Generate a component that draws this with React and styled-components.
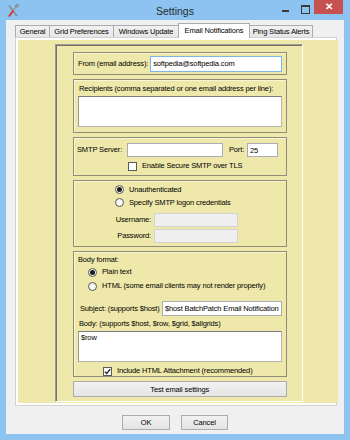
import React from "react";
import styled, { createGlobalStyle } from "styled-components";

const Global = createGlobalStyle`
  html, body { margin: 0; padding: 0; background: #8cc3f1; }
  body { width: 350px; height: 440px; overflow: hidden; font-family: "Liberation Sans", Arial, sans-serif; }
  * { box-sizing: border-box; }
`;

const Win = styled.div`
  width: 350px;
  height: 440px;
  background: #8cc3f1;
  display: flex;
  flex-direction: column;
`;

const TitleBar = styled.div`
  height: 20px;
  flex: none;
  display: grid;
  grid-template-columns: 1fr auto 1fr;
  align-items: start;
`;

const TitleLeft = styled.div`
  display: flex;
  padding: 4px 0 0 7px;
`;

const TitleText = styled.div`
  font-size: 10.5px;
  line-height: 12px;
  padding-top: 5px;
  color: #2a2a2a;
`;

const Controls = styled.div`
  display: flex;
  justify-content: flex-end;
  align-items: flex-start;
  padding-right: 7px;
`;

const MinBtn = styled.div`
  width: 24px;
  height: 14px;
  display: flex;
  justify-content: center;
  &::before {
    content: "";
    width: 7px;
    height: 2px;
    margin-top: 10px;
    background: #3a3a3a;
  }
`;

const MaxBtn = styled.div`
  width: 17px;
  height: 14px;
  display: flex;
  justify-content: center;
  padding-top: 5px;
  &::before {
    content: "";
    width: 7px;
    height: 6px;
    border: 1px solid #3a3a3a;
    border-top-width: 2px;
  }
`;

const CloseBtn = styled.div`
  width: 29px;
  height: 14px;
  background: #c75050;
  color: #fff;
  font-size: 10px;
  line-height: 14px;
  text-align: center;
  font-weight: bold;
`;

const Client = styled.div`
  flex: 1;
  margin: 0 6px 6px 6px;
  background: #f0f0f0;
  display: flex;
  flex-direction: column;
  padding: 3px 7px 0 9px;
`;

const TabStrip = styled.div`
  height: 14px;
  flex: none;
  display: flex;
  align-items: flex-end;
`;

const Tab = styled.div`
  position: relative;
  z-index: ${p => (p.$active ? 2 : 1)};
  width: ${p => p.$w}px;
  height: ${p => (p.$active ? 15 : 12)}px;
  margin-bottom: ${p => (p.$active ? -1 : 0)}px;
  margin-left: -1px;
  &:first-child { margin-left: 0; }
  border: 1px solid #acacac;
  border-bottom: none;
  background: ${p => (p.$active ? "#ffffff" : "linear-gradient(#f2f2f2, #e6e6e6)")};
  display: flex;
  align-items: center;
  justify-content: center;
  font-size: 7.5px;
  letter-spacing: -0.15px;
  color: #000;
  white-space: nowrap;
  padding-bottom: ${p => (p.$active ? 2 : 0)}px;
`;

const Panel = styled.div`
  height: 369px;
  flex: none;
  border: 1px solid #d2d2d2;
  background: #fff;
  padding: 2px;
  display: flex;
`;

const Page = styled.div`
  flex: 1;
  background: #eee8aa;
  padding: 4px 35px 1px 37px;
  display: flex;
`;

const Sunken = styled.div`
  flex: 1;
  border: 1px solid;
  border-color: #9a9a9a #ffffff #ffffff #9a9a9a;
  box-shadow: inset 1px 1px 0 #77745f;
  padding: 7px 15px 0 17px;
  display: flex;
  flex-direction: column;
  gap: 4px;
`;

const Group = styled.div`
  height: ${p => p.$h}px;
  flex: none;
  border: 1px solid #8f8c79;
  box-shadow: inset 1px 1px 0 #faf6d2;
  display: flex;
  flex-direction: ${p => (p.$row ? "row" : "column")};
  align-items: ${p => (p.$row ? "center" : "stretch")};
  padding: ${p => p.$pad || "0"};
`;

const Label = styled.span`
  font-size: 7.5px;
  letter-spacing: -0.15px;
  line-height: 10px;
  color: #000;
  white-space: nowrap;
  flex: none;
  width: ${p => (p.$w ? `${p.$w}px` : "auto")};
  text-align: ${p => p.$align || "left"};
  padding-left: ${p => p.$indent || 0}px;
`;

const Field = styled.div`
  height: ${p => p.$h || 15}px;
  width: ${p => (p.$w ? `${p.$w}px` : "auto")};
  flex: ${p => (p.$w ? "none" : "1")};
  min-width: 0;
  margin-left: ${p => p.$ml || 0}px;
  background: ${p => (p.$disabled ? "#efefef" : "#ffffff")};
  border: 1px solid ${p => (p.$focus ? "#7eb4ea" : p.$disabled ? "#d3d3d3" : "#abadb3")};
  font-size: 7.5px;
  letter-spacing: -0.15px;
  line-height: 10px;
  color: #000;
  padding: 1px 2px 0 2px;
  white-space: nowrap;
  overflow: hidden;
  display: flex;
  align-items: center;
`;

const TextArea = styled.div`
  height: 31px;
  flex: none;
  margin: ${p => p.$m || "0"};
  background: #fff;
  border: 1px solid #b4b4b4;
  border-top-color: #7a7a7a;
  border-left-color: #9a9a9a;
  font-size: 7.5px;
  letter-spacing: -0.15px;
  line-height: 10px;
  color: #000;
  padding: 1px 2px;
`;

const Row = styled.div`
  display: flex;
  align-items: center;
  height: ${p => p.$h}px;
  flex: none;
  margin-top: ${p => p.$mt || 0}px;
  padding-left: ${p => p.$pl || 0}px;
  padding-right: ${p => p.$pr || 0}px;
`;

const RadioDot = styled.span`
  width: 9px;
  height: 9px;
  flex: none;
  border-radius: 50%;
  border: 1px solid #5a5a5a;
  background: radial-gradient(#ffffff, #ececec);
  display: flex;
  align-items: center;
  justify-content: center;
  margin-right: 5px;
  &::after {
    content: "";
    width: 5px;
    height: 5px;
    border-radius: 50%;
    background: ${p => (p.$on ? "#1b1b1b" : "transparent")};
  }
`;

const CheckBox = styled.span`
  width: 9px;
  height: 9px;
  flex: none;
  border: 1px solid #5a5a5a;
  background: #fff;
  margin-right: 5px;
  display: flex;
  align-items: center;
  justify-content: center;
`;

const WideButton = styled.div`
  height: 16px;
  flex: none;
  border: 1px solid #acacac;
  background: linear-gradient(#f1f1f1, #e4e4e4);
  display: flex;
  align-items: center;
  justify-content: center;
  font-size: 7.5px;
  letter-spacing: -0.15px;
  color: #000;
`;

const ButtonBar = styled.div`
  flex: 1;
  margin: 0 -7px 0 -9px;
  display: flex;
  justify-content: center;
  align-items: flex-start;
  padding-top: 9px;
  gap: 11px;
`;

const DlgButton = styled.div`
  width: ${p => p.$w}px;
  height: 15px;
  border: 1px solid #acacac;
  background: linear-gradient(#f1f1f1, #e4e4e4);
  display: flex;
  align-items: center;
  justify-content: center;
  font-size: 7.5px;
  letter-spacing: -0.15px;
  color: #000;
`;

const AppIcon = () => (
  <svg width="12" height="14" viewBox="0 0 12 14">
    <line x1="2" y1="1.5" x2="10" y2="12" stroke="#8a8a8a" strokeWidth="1.6" />
    <line x1="10" y1="1" x2="6.2" y2="6.5" stroke="#9a9a9a" strokeWidth="1.6" />
    <line x1="6.2" y1="6.5" x2="2" y2="12.5" stroke="#d23c2c" strokeWidth="2" />
    <circle cx="10" cy="1.8" r="1.4" fill="none" stroke="#8a8a8a" strokeWidth="1" />
  </svg>
);

const Check = () => (
  <svg width="7" height="7" viewBox="0 0 7 7">
    <path d="M0.8 3.6 L2.7 5.5 L6.2 1.2" fill="none" stroke="#1b1b1b" strokeWidth="1.2" />
  </svg>
);

const tabs = [
  { label: "General", w: 35 },
  { label: "Grid Preferences", w: 65 },
  { label: "Windows Update", w: 66 },
  { label: "Email Notifications", w: 72, active: true },
  { label: "Ping Status Alerts", w: 64 },
];

export default function App() {
  return (
    <>
      <Global />
      <Win>
        <TitleBar>
          <TitleLeft>
            <AppIcon />
          </TitleLeft>
          <TitleText>Settings</TitleText>
          <Controls>
            <MinBtn />
            <MaxBtn />
            <CloseBtn>✕</CloseBtn>
          </Controls>
        </TitleBar>
        <Client>
          <TabStrip>
            {tabs.map(t => (
              <Tab key={t.label} $w={t.w} $active={t.active}>
                {t.label}
              </Tab>
            ))}
          </TabStrip>
          <Panel>
            <Page>
              <Sunken>
                <Group $h={23} $row $pad="0 4px 0 4px">
                  <Label>From (email address):</Label>
                  <Field $h={16} $ml={2} $focus>softpedia@softpedia.com</Field>
                </Group>

                <Group $h={54} $pad="4px 4px 5px 4px">
                  <Label $indent={1}>Recipients (comma separated or one email address per line):</Label>
                  <TextArea $m="2px 0 0 0" />
                </Group>

                <Group $h={39} $pad="5px 0 0 0">
                  <Row $h={14} $pl={3}>
                    <Label $w={48}>SMTP Server:</Label>
                    <Field $h={14} $w={96} $ml={2} />
                    <Label $w={18} $indent={2} style={{ marginLeft: 4 }}>Port:</Label>
                    <Field $h={14} $w={31} $ml={2}>25</Field>
                  </Row>
                  <Row $h={10} $mt={4} $pl={54}>
                    <CheckBox />
                    <Label>Enable Secure SMTP over TLS</Label>
                  </Row>
                </Group>

                <Group $h={67} $pad="2px 0 0 0">
                  <Row $h={13} $pl={41}>
                    <RadioDot $on />
                    <Label>Unauthenticated</Label>
                  </Row>
                  <Row $h={13} $pl={41}>
                    <RadioDot />
                    <Label>Specify SMTP logon credentials</Label>
                  </Row>
                  <Row $h={14} $mt={4} $pl={37}>
                    <Label $w={40} $align="right">Username:</Label>
                    <Field $h={14} $w={84} $ml={3} $disabled />
                  </Row>
                  <Row $h={14} $mt={2} $pl={37}>
                    <Label $w={40} $align="right">Password:</Label>
                    <Field $h={14} $w={84} $ml={3} $disabled />
                  </Row>
                </Group>

                <Group $h={126} $pad="3px 0 0 0">
                  <Label $indent={4}>Body format:</Label>
                  <Row $h={14} $pl={14}>
                    <RadioDot $on />
                    <Label>Plain text</Label>
                  </Row>
                  <Row $h={14} $pl={14}>
                    <RadioDot />
                    <Label>HTML (some email clients may not render properly)</Label>
                  </Row>
                  <Row $h={15} $mt={8} $pl={6} $pr={4}>
                    <Label $w={79}>Subject: (supports $host)</Label>
                    <Field $h={15} $ml={3}>$host BatchPatch Email Notification</Field>
                  </Row>
                  <Row $h={10} $mt={3} $pl={5}>
                    <Label>Body: (supports $host, $row, $grid, $allgrids)</Label>
                  </Row>
                  <TextArea $m="2px 4px 0 4px">$row</TextArea>
                  <Row $h={10} $mt={4} $pl={29}>
                    <CheckBox>
                      <Check />
                    </CheckBox>
                    <Label>Include HTML Attachment (recommended)</Label>
                  </Row>
                </Group>

                <WideButton>Test email settings</WideButton>
              </Sunken>
            </Page>
          </Panel>
          <ButtonBar>
            <DlgButton $w={48}>OK</DlgButton>
            <DlgButton $w={47}>Cancel</DlgButton>
          </ButtonBar>
        </Client>
      </Win>
    </>
  );
}
